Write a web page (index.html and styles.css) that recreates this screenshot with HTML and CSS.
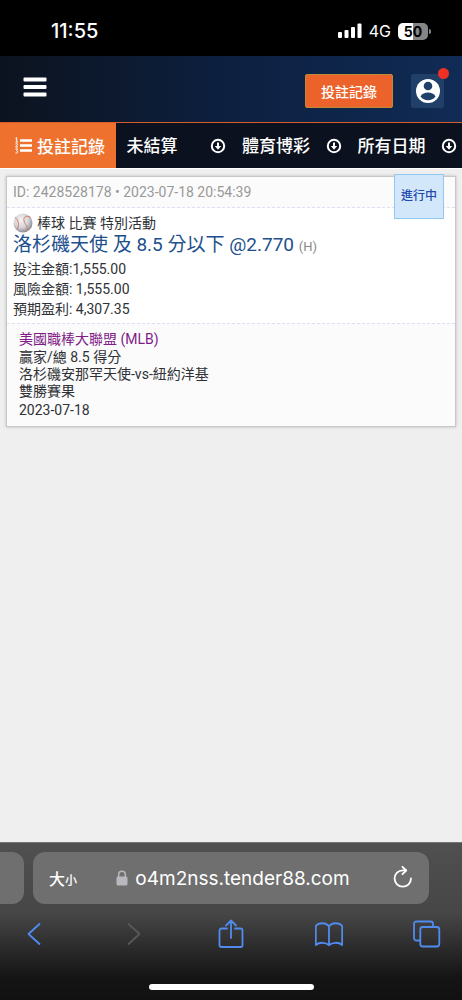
FILE: index.html
```html
<!DOCTYPE html>
<html lang="zh-Hant">
  <head>
    <meta charset="utf-8" />
    <title>投註記錄</title>
    <meta name="viewport" content="width=device-width, initial-scale=1.0" />
    <link rel="stylesheet" href="styles.css" />
  </head>
  <body>
    <div class="status-bar">
      <span class="time">11:55</span>
      <div class="status-icons">
        <svg width="24" height="16" viewBox="0 0 24 16" fill="#fff">
          <rect x="0" y="9" width="4" height="6" rx="1" />
          <rect x="6.5" y="7" width="4" height="8" rx="1" />
          <rect x="13" y="4" width="4" height="11" rx="1" />
          <rect x="19.5" y="0.5" width="4" height="14.5" rx="1" />
        </svg>
        <span class="network">4G</span>
        <span class="battery">50</span>
      </div>
    </div>

    <header class="site-header">
      <button class="menu-button" type="button" aria-label="選單">
        <svg width="24" height="20" viewBox="0 0 24 20" fill="#fff">
          <rect x="0.5" y="0.5" width="23" height="4" rx="1" />
          <rect x="0.5" y="8" width="23" height="4" rx="1" />
          <rect x="0.5" y="15.5" width="23" height="4" rx="1" />
        </svg>
      </button>
      <button class="history-button" type="button">投註記錄</button>
      <button class="account-button" type="button" aria-label="帳戶">
        <svg width="26" height="26" viewBox="0 0 26 26">
          <circle cx="13" cy="13" r="12" fill="#fff" />
          <circle cx="13" cy="8" r="4.3" fill="#203f69" />
          <path d="M5.5 18.5C7 15.5 10 14.5 13 14.5s6 1 7.500 4c-1.800 2.600-4.500 3.800-7.500 3.800s-5.700-1.200-7.500-3.800z" fill="#203f69" />
        </svg>
        <span class="alert-dot"></span>
      </button>
    </header>

    <nav class="filters">
      <a class="filter active" href="#">
        <svg width="18" height="17" viewBox="0 0 18 17" fill="none" stroke="#fff">
          <path d="M5 3.500h12M5 8.500h12M5 13.500h12" stroke-width="2.400" />
          <path d="M0.500 1.500l1.200-.8v4M0.500 5H3M0.500 7q2.200-1 2 .6L.6 10H3M.5 12h2.200l-1.200 1.600q1.600.2 1.200 1.500t-2.200.9" stroke-width="1" />
        </svg>
        投註記錄
      </a>
      <div class="filter">
        <select aria-label="狀態">
          <option>未結算</option>
        </select>
        <svg class="arrow" width="16" height="16" viewBox="0 0 16 16" fill="none" stroke="#fff" stroke-width="2">
          <circle cx="8" cy="8" r="6.2" />
          <path d="M8 4.500v5" />
          <path d="M4.800 8h6.400L8 11.700z" fill="#fff" stroke="none" />
        </svg>
      </div>
      <div class="filter">
        <select aria-label="類別">
          <option>體育博彩</option>
        </select>
        <svg class="arrow" width="16" height="16" viewBox="0 0 16 16" fill="none" stroke="#fff" stroke-width="2">
          <circle cx="8" cy="8" r="6.2" />
          <path d="M8 4.500v5" />
          <path d="M4.800 8h6.400L8 11.700z" fill="#fff" stroke="none" />
        </svg>
      </div>
      <div class="filter">
        <select aria-label="日期">
          <option>所有日期</option>
        </select>
        <svg class="arrow" width="16" height="16" viewBox="0 0 16 16" fill="none" stroke="#fff" stroke-width="2">
          <circle cx="8" cy="8" r="6.2" />
          <path d="M8 4.500v5" />
          <path d="M4.800 8h6.400L8 11.700z" fill="#fff" stroke="none" />
        </svg>
      </div>
    </nav>

    <main>
      <article class="bet">
        <div class="bet-id">ID: 2428528178 • 2023-07-18 20:54:39</div>
        <span class="bet-status">進行中</span>
        <div class="bet-body">
          <div class="category">
            <svg width="20" height="20" viewBox="0 0 20 20" fill="none">
              <defs>
                <radialGradient id="ball" cx="40%" cy="35%" r="65%">
                  <stop offset="0" stop-color="#f4f4f6" />
                  <stop offset="0.6" stop-color="#d3d3d8" />
                  <stop offset="1" stop-color="#8c8c94" />
                </radialGradient>
              </defs>
              <circle cx="10" cy="10" r="9.5" fill="url(#ball)" />
              <path d="M2 4.500c3.500 2 4.500 7.500 2.200 12M17.500 4.500c-4-2.500-7.500-.5-6.500 3.500s4.500 5 3 10" stroke="#d67a62" />
            </svg>
            棒球 比賽 特別活動
          </div>
          <h1>洛杉磯天使 及 8.5 分以下 @2.770 <small>(H)</small></h1>
          <div class="amount">投注金額:1,555.00</div>
          <div class="amount">風險金額: 1,555.00</div>
          <div class="amount">預期盈利: 4,307.35</div>
        </div>
        <div class="bet-event">
          <div class="league">美國職棒大聯盟 (MLB)</div>
          <div>贏家/總 8.5 得分</div>
          <div>洛杉磯安那罕天使-vs-紐約洋基</div>
          <div>雙勝賽果</div>
          <div class="date">2023-07-18</div>
        </div>
      </article>
    </main>

    <footer class="browser">
      <div class="address-row">
        <div class="previous-tab"></div>
        <div class="address">
          <button class="text-size" type="button">大<small>小</small></button>
          <div class="url">
            <svg width="12" height="16" viewBox="0 0 12 16" fill="none">
              <path d="M2.700 8V4.500a3.300 3.300 0 0 1 6.600 0V8" stroke="#b9b8be" stroke-width="1.500" />
              <rect x="0.5" y="6.5" width="11" height="9" rx="1.5" fill="#b9b8be" />
            </svg>
            o4m2nss.tender88.com
          </div>
          <button type="button" aria-label="重新載入">
            <svg width="20" height="24" viewBox="0 0 20 24" fill="none" stroke="#fff" stroke-width="1.800" stroke-linecap="round" stroke-linejoin="round">
              <path d="M18 12.500a8.200 8.200 0 1 1-8.200-8.200h3.200" />
              <path d="M9.500 0.900l3.700 3.600-3.700 3.700" />
            </svg>
          </button>
        </div>
      </div>
      <div class="toolbar">
        <button type="button" aria-label="上一頁">
          <svg width="28" height="30" viewBox="0 0 28 30"><path d="M19.500 5L8.500 15l11 10" /></svg>
        </button>
        <button class="disabled" type="button" aria-label="下一頁" disabled>
          <svg width="28" height="30" viewBox="0 0 28 30"><path d="M10.500 5l11 10-11 10" /></svg>
        </button>
        <button type="button" aria-label="分享">
          <svg width="28" height="30" viewBox="0 0 28 30"><path d="M10 9.500H4.500a2 2 0 0 0-2 2V26a2 2 0 0 0 2 2h19a2 2 0 0 0 2-2V11.500a2 2 0 0 0-2-2H18M14 19V1.500M9 6.500l5-5 5 5" /></svg>
        </button>
        <button type="button" aria-label="書籤">
          <svg width="28" height="30" viewBox="0 0 28 30"><path d="M14 7.500C11 3 3.500 3.500.8 7v19c3.200-3 10.200-3 13.200.2 3-3.200 10-3.200 13.200-.2V7C24.500 3.500 17 3 14 7.500zM14 7.500v18.700" /></svg>
        </button>
        <button type="button" aria-label="分頁">
          <svg width="28" height="30" viewBox="0 0 28 30"><path d="M7 21.500H3.500a2.500 2.500 0 0 1-2.500-2.500V5a2.500 2.500 0 0 1 2.500-2.500h14a2.500 2.500 0 0 1 2.500 2.500v3" /><rect x="7.3" y="8" width="19" height="19.5" rx="2.5" /></svg>
        </button>
      </div>
      <div class="home-indicator"></div>
    </footer>
  </body>
</html>
```
FILE: styles.css
```css
* {
  box-sizing: border-box;
}

body {
  margin: 0;
  min-height: 100vh;
  display: flex;
  flex-direction: column;
  background: #efefef;
  color: #2f3136;
  font-family: Roboto, "Noto Sans CJK TC", sans-serif;
  font-size: 14px;
}

button,
select {
  margin: 0;
  padding: 0;
  border: 0;
  background: none;
  color: #fff;
  font: inherit;
}

svg {
  display: block;
  flex: none;
}

/* Phone status bar */
.status-bar {
  height: 56px;
  padding: 6px 34px 0 51px;
  display: flex;
  align-items: center;
  justify-content: space-between;
  background: #000;
  color: #fff;
  font-family: Inter, sans-serif;
}

.time {
  font-size: 20px;
  font-weight: 500;
}

.status-icons {
  display: flex;
  align-items: center;
  gap: 7px;
}

.network {
  font-size: 16px;
}

.battery {
  position: relative;
  width: 30px;
  height: 17px;
  border-radius: 5px;
  background: linear-gradient(to right, #fff 50%, #858585 50%);
  color: #000;
  font-size: 14px;
  font-weight: 700;
  line-height: 17px;
  text-align: center;
}

.battery::after {
  content: "";
  position: absolute;
  left: 31px;
  top: 6px;
  width: 2px;
  height: 5px;
  border-radius: 0 2px 2px 0;
  background: #858585;
}

/* Site header */
.site-header {
  height: 66px;
  padding: 4px 18px 0 23px;
  display: flex;
  align-items: center;
  gap: 18px;
  background: linear-gradient(to right, #0c131f, #0d2040 50%, #102b55);
}

.menu-button {
  margin: 0 auto 8px 0;
}

.history-button {
  width: 88px;
  height: 34px;
  border: 1px solid #bd8a35;
  border-radius: 2px;
  background: #eb632b;
  font-weight: 500;
}

.account-button {
  position: relative;
  width: 33px;
  height: 34px;
  display: grid;
  place-items: center;
  border-radius: 2px;
  background: #203f69;
}

.alert-dot {
  position: absolute;
  top: -6px;
  right: -5px;
  width: 11px;
  height: 11px;
  border-radius: 50%;
  background: #ee3124;
}

/* Filters */
.filters {
  height: 46px;
  display: flex;
  border-top: 1px solid #d95c2b;
  background: #0b111e;
}

.filter {
  width: 25%;
  padding: 0 5px 0 11px;
  display: flex;
  align-items: center;
  color: #fff;
  font-size: 17px;
  font-weight: 500;
  text-decoration: none;
}

.filter.active {
  padding: 0 0 0 15px;
  gap: 4px;
  background: #ee722e;
  white-space: nowrap;
}

.filter select {
  flex: 1;
  min-width: 0;
  height: 100%;
  appearance: none;
}

/* Bets */
main {
  flex: 1;
  padding: 7px 6px;
  border-top: 1px solid #fff;
}

.bet {
  position: relative;
  border: 1px solid #c8c8c8;
  background: #fff;
  box-shadow: 0 0 3px #bbb;
}

.bet-id {
  padding: 0 6px;
  border-bottom: 1px dashed #dbe1f3;
  background: #fbfbfb;
  color: #999;
  line-height: 30px;
}

.bet-status {
  position: absolute;
  top: -3px;
  right: 11px;
  width: 50px;
  height: 45px;
  border: 1px solid #91c9f5;
  background: #d3e7fb;
  color: #2349ae;
  font-size: 12px;
  font-weight: 500;
  line-height: 43px;
  text-align: center;
}

.bet-body {
  padding: 5px 6px 4px;
  border-bottom: 1px dashed #dbe1f3;
}

.category {
  display: flex;
  align-items: center;
  gap: 4px;
  line-height: 20px;
}

h1 {
  margin: 0;
  color: #214f8c;
  font-size: 19px;
  font-weight: 400;
  line-height: 24px;
}

h1 small {
  color: #888;
  font-size: 13px;
}

.amount {
  line-height: 20px;
}

.bet-event {
  padding: 5px 12px 6px;
  background: #fbfbfb;
  line-height: 17px;
}

.league {
  color: #811c88;
  line-height: 20px;
}

.date {
  line-height: 20px;
}

/* Browser controls */
.browser {
  border-top: 1px solid #777;
  background: linear-gradient(#505050, #464646 45%, #151515 85%, #111);
}

.address-row {
  padding: 9px 33px 0 0;
  display: flex;
  gap: 9px;
}

.previous-tab {
  width: 24px;
  border-radius: 0 12px 12px 0;
  background: #6f6f6f;
}

.address {
  flex: 1;
  height: 52px;
  padding: 0 16px;
  display: flex;
  align-items: center;
  justify-content: space-between;
  border-radius: 12px;
  background: #6f6f6f;
  color: #fff;
  font-family: Inter, "Noto Sans CJK TC", sans-serif;
}

.text-size {
  font-size: 16px;
  font-weight: 500;
}

.text-size small {
  font-size: 12px;
}

.url {
  padding-right: 4px;
  display: flex;
  align-items: center;
  gap: 7px;
  font-size: 19px;
}

.toolbar {
  height: 60px;
  padding: 0 21px 0 20px;
  display: flex;
  align-items: center;
  justify-content: space-between;
}

.toolbar svg {
  fill: none;
  stroke: #528bf0;
  stroke-width: 1.8;
  stroke-linecap: round;
  stroke-linejoin: round;
}

.toolbar .disabled svg {
  stroke: #585858;
}

.home-indicator {
  width: 165px;
  height: 6px;
  margin: 20px auto 10px;
  border-radius: 3px;
  background: #fff;
}
```
